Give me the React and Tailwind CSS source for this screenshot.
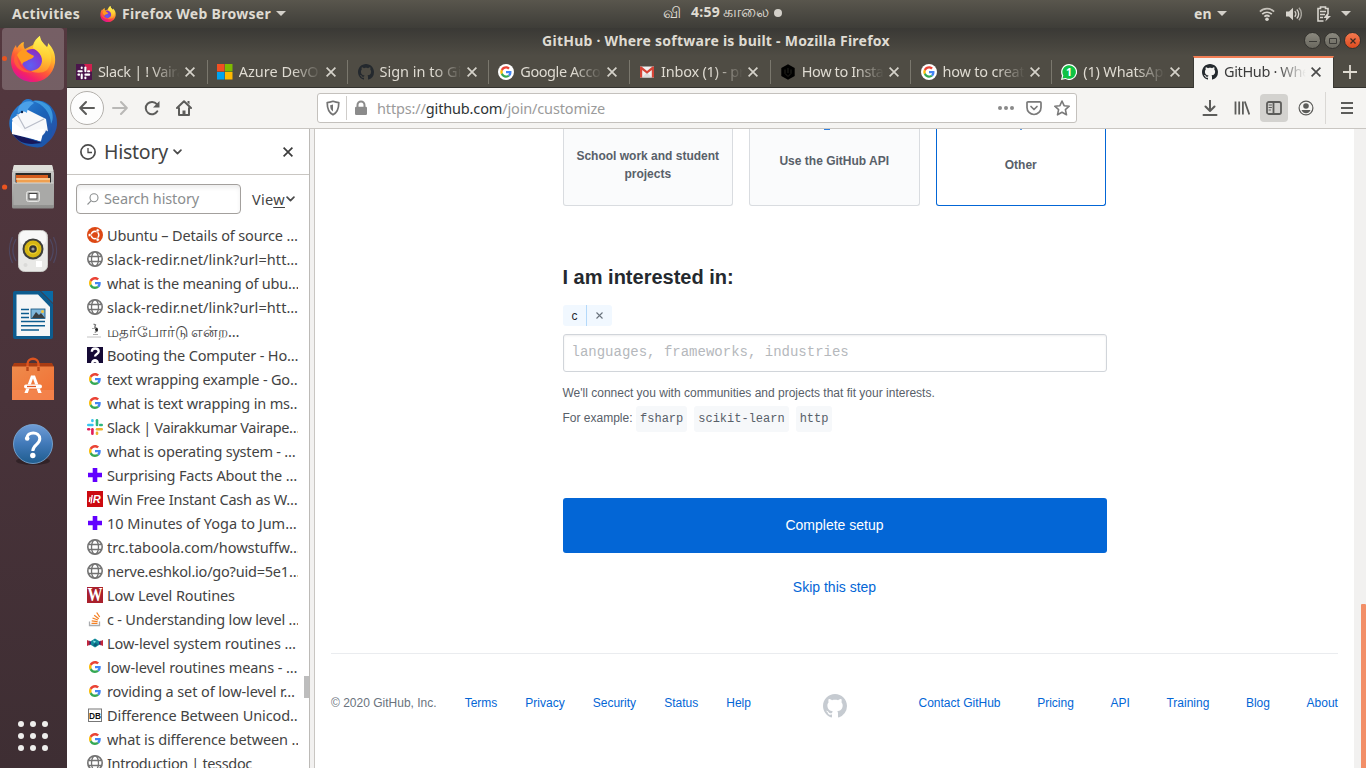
const UI = "font-['Noto_Sans',sans-serif]";

/* ---------- shared logos ---------- */

function Octocat({ className }) {
  return (
    <svg viewBox="0 0 16 16" className={className} fill="currentColor">
      <path d="M8 0C3.58 0 0 3.58 0 8c0 3.54 2.29 6.53 5.47 7.59.4.07.55-.17.55-.38 0-.19-.01-.82-.01-1.49-2.01.37-2.53-.49-2.69-.94-.09-.23-.48-.94-.82-1.13-.28-.15-.68-.52-.01-.53.63-.01 1.08.58 1.23.82.72 1.21 1.87.87 2.33.66.07-.52.28-.87.51-1.07-1.78-.2-3.64-.89-3.64-3.95 0-.87.31-1.59.82-2.15-.08-.2-.36-1.02.08-2.12 0 0 .67-.21 2.2.82.64-.18 1.32-.27 2-.27.68 0 1.36.09 2 .27 1.53-1.04 2.2-.82 2.2-.82.44 1.1.16 1.92.08 2.12.51.56.82 1.27.82 2.15 0 3.07-1.87 3.75-3.65 3.95.29.25.54.73.54 1.48 0 1.07-.01 1.93-.01 2.2 0 .21.15.46.55.38A8.013 8.013 0 0016 8c0-4.42-3.58-8-8-8z" />
    </svg>
  );
}

function GooglePaths() {
  return (
    <>
      <path fill="#EA4335" d="M24 9.5c3.54 0 6.71 1.22 9.21 3.6l6.85-6.85C35.9 2.38 30.47 0 24 0 14.62 0 6.51 5.38 2.56 13.22l7.98 6.19C12.43 13.72 17.74 9.5 24 9.5z" />
      <path fill="#4285F4" d="M46.98 24.55c0-1.57-.15-3.09-.38-4.55H24v9.02h12.94c-.58 2.96-2.26 5.48-4.78 7.18l7.73 6c4.51-4.18 7.09-10.36 7.09-17.65z" />
      <path fill="#FBBC05" d="M10.53 28.59c-.48-1.45-.76-2.99-.76-4.59s.27-3.14.76-4.59l-7.98-6.19C.92 16.46 0 20.12 0 24c0 3.88.92 7.54 2.56 10.78l7.97-6.19z" />
      <path fill="#34A853" d="M24 48c6.48 0 11.93-2.13 15.89-5.81l-7.73-6c-2.15 1.45-4.92 2.3-8.16 2.3-6.26 0-11.57-4.22-13.47-9.91l-7.98 6.19C6.51 42.62 14.62 48 24 48z" />
    </>
  );
}

function Firefox({ className }) {
  return (
    <svg viewBox="0 0 46 46" className={className}>
      <defs>
        <linearGradient id="ffBody" x1="0.8" y1="0.1" x2="0.3" y2="1">
          <stop offset="0" stopColor="#fff44f" />
          <stop offset="0.3" stopColor="#ffb52a" />
          <stop offset="0.6" stopColor="#ff5b36" />
          <stop offset="0.85" stopColor="#f4206a" />
          <stop offset="1" stopColor="#d6179a" />
        </linearGradient>
        <linearGradient id="ffTail" x1="0.6" y1="0" x2="0.5" y2="1">
          <stop offset="0" stopColor="#fff65a" />
          <stop offset="0.55" stopColor="#ffce33" />
          <stop offset="1" stopColor="#ff8a2b" />
        </linearGradient>
        <radialGradient id="ffGlobe" cx="0.4" cy="0.75" r="0.8">
          <stop offset="0" stopColor="#5d60f2" />
          <stop offset="0.55" stopColor="#7a3fdc" />
          <stop offset="1" stopColor="#8e2bb5" />
        </radialGradient>
      </defs>
      <path fill="url(#ffBody)" d="M23 9 C24 5 27 2 30 0 C30 4 33 7 37 11 C38 10 38 8 38 7 C43 12 46 18 45 27 C43 39 34 46 23 46 C10 46 1 37 1 25 C1 19 3 13 6 9 C6 11 7 12 7 12 C9 9 12 6 14 6 C13 9 14 12 15 13 Z" />
      <circle cx="22.500" cy="24" r="11" fill="url(#ffGlobe)" />
      <path fill="url(#ffTail)" d="M23 12 C24 6 27 2 30 0 C30 5 34 8 38 13 C42 19 43 27 37 34 C32 38 24 37 21 35 C30 34 34 27 31 20 C29 16 26 14 23 12 Z" />
      <path fill="#ff9a1f" d="M15 13 C17 17 21 18 24 20 C23 23 20 23 18 24 C16 26 13 25 12 29 C11 25 8 22 7 19 C9 15 12 14 15 13 Z" />
      <path fill="#ff6a2f" fillOpacity="0.7" d="M7 19 C7 30 15 36 23 36 C15 38 6 34 4 25 C4 21 5 18 7 16 Z" />
    </svg>
  );
}

const hash = (a, b, c, d) => (
  <>
    <g fill={a}><rect x="0" y="4.700" width="6.700" height="2.600" rx="1.300" /><rect x="4.100" y="0" width="2.600" height="3.300" rx="1.300" /></g>
    <g fill={b}><rect x="8.700" y="0" width="2.600" height="7.300" rx="1.300" /><rect x="12" y="4.700" width="4" height="2.600" rx="1.300" /></g>
    <g fill={c}><rect x="8.700" y="9" width="7.300" height="2.600" rx="1.300" /><rect x="8.700" y="12.500" width="2.600" height="3.500" rx="1.300" /></g>
    <g fill={d}><rect x="4.100" y="9" width="2.600" height="7" rx="1.300" /><rect x="0" y="9" width="3.400" height="2.600" rx="1.300" /></g>
  </>
);

/* ---------- favicons ---------- */

function Fav({ kind }) {
  const svg = (children) => (
    <svg viewBox="0 0 16 16" className="h-4 w-4 shrink-0">{children}</svg>
  );
  switch (kind) {
    case "slackTab":
      return svg(
        <>
          <rect width="16" height="16" fill="#4a154b" />
          <path d="M8 0h8v7.500H12z" fill="#d1204f" />
          <g transform="translate(1.400 2.400) scale(.8)">{hash("#fff", "#fff", "#fff", "#fff")}</g>
        </>
      );
    case "slack":
      return svg(hash("#36c5f0", "#2eb67d", "#ecb22e", "#e01e5a"));
    case "azure":
      return svg(
        <>
          <path d="M0 0h7.500v7.500H0z" fill="#f25022" />
          <path d="M8 0h7.500v7.500H8z" fill="#7fba00" />
          <path d="M0 8h7.500v7.500H0z" fill="#00a4ef" />
          <path d="M8 8h7.500v7.500H8z" fill="#ffb900" />
        </>
      );
    case "github":
      return <Octocat className="h-4 w-4 shrink-0 text-[#24292e]" />;
    case "googleTab":
      return svg(
        <>
          <circle cx="8" cy="8" r="8" fill="#fff" />
          <g transform="translate(2.300 2.300) scale(.238)"><GooglePaths /></g>
        </>
      );
    case "google":
      return svg(<g transform="translate(2 2) scale(.25)"><GooglePaths /></g>);
    case "gmail":
      return svg(
        <>
          <path d="M1 2.500h14v11H1z" fill="#f1f1f1" />
          <path d="M3 13.500 8 8.500l5 5z" fill="#dcdcdc" />
          <path d="M1 13.500v-11h1.500L8 7l5.500-4.500H15v11h-2.200V6L8 9.800 3.200 6v7.500z" fill="#d54437" />
        </>
      );
    case "hex":
      return svg(
        <>
          <path d="M8 0.300 14.700 4v8L8 15.700 1.300 12V4z" fill="#000" />
          <path d="M8 4v5M5 5.500v4l3 3 3-3v-4" stroke="#25241f" strokeWidth="1" fill="none" />
        </>
      );
    case "whatsapp":
      return svg(
        <>
          <path d="M8 0a8 8 0 1 1-3.600 15.100L0 16l1-4.300A8 8 0 0 1 8 0z" fill="#fff" />
          <path d="M8 1.200a6.800 6.800 0 1 1-3.300 12.700l-3.200.7.800-3.100A6.800 6.800 0 0 1 8 1.200z" fill="#0fc144" />
          <text x="8" y="12" textAnchor="middle" fontSize="10.500" fontWeight="700" fill="#fff" fontFamily="Noto Sans">1</text>
        </>
      );
    case "ubuntu":
      return svg(
        <>
          <circle cx="8" cy="8" r="8" fill="#dd4814" />
          <circle cx="8" cy="8" r="3.700" fill="none" stroke="#fff" strokeWidth="1.700" />
          <path d="M8 8 12.500 2M8 8H1M8 8l4.500 6" stroke="#dd4814" strokeWidth=".8" />
          <circle cx="8" cy="8" r="2.600" fill="#dd4814" />
          <g fill="#fff" stroke="#dd4814" strokeWidth=".5">
            <circle cx="2.700" cy="8" r="1.600" /><circle cx="10.700" cy="3.300" r="1.600" /><circle cx="10.700" cy="12.700" r="1.600" />
          </g>
        </>
      );
    case "globe":
      return svg(
        <g fill="none" stroke="#737373" strokeWidth="1.300">
          <circle cx="8" cy="8" r="7.200" strokeWidth="1.600" />
          <ellipse cx="8" cy="8" rx="3.500" ry="7.200" />
          <path d="M1.600 5.500h12.800M1.600 10.500h12.800" />
        </g>
      );
    case "microscope":
      return svg(
        <>
          <path d="M0 14h14" stroke="#c4c4c4" strokeWidth="1" />
          <path d="M6.500 1l2 .8-.7 2.400 2.200 1.300.3 2.500-2.600 1.500" fill="none" stroke="#777" strokeWidth="1.300" />
          <circle cx="9.500" cy="6.500" r="1.500" fill="#222" />
          <path d="M5 5.500h3M6 11.500h5" stroke="#aaa" strokeWidth="1" />
        </>
      );
    case "howstuff":
      return svg(
        <>
          <rect width="16" height="16" fill="#150a35" />
          <path d="M4.800 4.800C4.900 2.300 6.400 1.500 8.200 1.500c1.900 0 3.500 1 3.500 2.900 0 2.700-3.700 2.500-3.700 5.200" fill="none" stroke="#fff" strokeWidth="2.300" />
          <path d="M4 16c.5-3 2-4 4-4s3.500 1 4 4h-2.500c-.3-1-3-1-3 0z" fill="#fff" />
        </>
      );
    case "plus":
      return svg(<path d="M5.700 1h4.600v4.700H15v4.600h-4.700V15H5.700v-4.700H1V5.700h4.700z" fill="#6200ff" />);
    case "r":
      return svg(
        <>
          <rect width="16" height="16" fill="#cc0a10" />
          <path d="M3.200 6l-1 5M5.200 4 4 12.500" stroke="#fff" strokeWidth="1.300" />
          <text x="9.700" y="12" textAnchor="middle" fontSize="11" fontWeight="700" fontStyle="italic" fill="#fff" fontFamily="Liberation Sans">R</text>
        </>
      );
    case "w":
      return svg(
        <>
          <rect width="16" height="16" fill="#a9202c" />
          <text x="8" y="14" textAnchor="middle" fontSize="18" fontWeight="700" fill="#fff" fontFamily="Liberation Serif" textLength="15" lengthAdjust="spacingAndGlyphs">W</text>
        </>
      );
    case "so":
      return svg(
        <g fill="none">
          <path d="M2.500 10.500v4h10v-4" stroke="#a9abae" strokeWidth="1.300" />
          <path d="M4.500 12.300h6M4.700 9.800l5.900.8M5.500 7l5.500 2M7.200 4.200l4.600 3.500M9.700 1.500l3 4.500" stroke="#f48024" strokeWidth="1.300" />
        </g>
      );
    case "molecule":
      return svg(
        <>
          <path d="M0 5 3.500 6.500v3L0 11z" fill="#c3263b" /><path d="M16 5l-3.500 1.500v3L16 11z" fill="#c3263b" />
          <path d="M2.500 5.500 5 7.500v1l-2.500 2zM13.500 5.500 11 7.500v1l2.500 2z" fill="#2b2b7c" />
          <path d="M8 3.500 12 6v4l-4 2.500L4 10V6z" fill="#128a9a" /><path d="M6 5.500l3 1-2 1.500z" fill="#8fe3ea" /><path d="M8 8l3 1-2 2.500-3-1z" fill="#0b5a78" />
        </>
      );
    case "db":
      return svg(
        <>
          <rect x="1.500" y="2" width="13" height="12.500" fill="#fff" stroke="#777" />
          <text x="8" y="11.500" textAnchor="middle" fontSize="9" fontWeight="700" fill="#111" fontFamily="Liberation Sans" textLength="12" lengthAdjust="spacingAndGlyphs">DB</text>
        </>
      );
    default:
      return null;
  }
}

/* ---------- GNOME top bar ---------- */

function Caret({ className }) {
  return (
    <svg viewBox="0 0 10 5" className={`h-[5px] w-[10px] shrink-0 ${className}`}>
      <path d="M0 0h10L5 5z" fill="#d3d0c9" />
    </svg>
  );
}

function TopBar() {
  return (
    <header className="flex h-7 items-center bg-linear-to-b from-[#59564d] to-[#3e3d38] pb-px text-[14px] font-bold text-[#dfdbd2]">
      <div className="flex w-[663px] shrink-0 items-center whitespace-nowrap pl-3">
        <span className="w-[88px] tracking-[0.3px]">Activities</span>
        <Firefox className="h-4 w-4" />
        <span className="ml-1.5 w-[154px] tracking-[0.3px]">Firefox Web Browser</span>
        <Caret className="" />
      </div>
      <div className="flex w-[531px] shrink-0 items-center pb-px leading-5 whitespace-nowrap">
        <span className="w-7 pb-0.5 text-[15.500px] font-medium">வி</span>
        <span className="flex w-[83px] items-baseline pb-[3px]">
          <span className="w-8 tracking-[0.3px]">4:59</span>
          <span className="text-[15.500px] font-medium tracking-[0.4px]">காலை</span>
        </span>
        <span className="h-2 w-2 rounded-full bg-[#d3d0c9]" />
      </div>
      <span className="w-[23px] tracking-[0.2px]">en</span>
      <Caret className="" />
      <svg viewBox="0 0 16 16" className="ml-[32px] h-4 w-4" fill="none" stroke="#d8d5ce" strokeWidth="1.700">
        <path d="M.9 5.600c4-3.900 10.200-3.900 14.200 0" strokeOpacity=".85" />
        <path d="M3.200 8.200c2.700-2.600 6.900-2.600 9.600 0M5.400 10.700c1.500-1.400 3.700-1.400 5.200 0" />
        <circle cx="8" cy="13.300" r="1.800" fill="#d8d5ce" stroke="none" />
      </svg>
      <svg viewBox="0 0 16 16" className="ml-[11px] h-4 w-4" fill="none" stroke="#d8d5ce" strokeWidth="1.400">
        <path d="M0 5.500h3L7 1.800v12.400L3 10.500H0z" fill="#d8d5ce" stroke="none" />
        <path d="M8.700 5.300c1.500 1.500 1.500 3.900 0 5.400M10.800 3.500c2.500 2.500 2.500 6.500 0 9" /><path d="M12.900 1.800c3.300 3.400 3.300 9 0 12.400" strokeOpacity=".65" />
      </svg>
      <svg viewBox="0 0 16 16" className="ml-[13px] h-4 w-4" fill="none" stroke="#d8d5ce" strokeWidth="1.600">
        <path d="M13 7V2.500h-2.500V1h-5v1.500H3V15h5.500" />
        <path d="M5 5.500h6M5 8.500h5M5 11.500h3" />
        <path d="M12.500 7l-4 5h2.800l-1 3.500L16 10h-3l1-3z" fill="#d8d5ce" stroke="none" />
      </svg>
      <Caret className="ml-2.5" />
    </header>
  );
}

/* ---------- dock ---------- */

function Dock() {
  return (
    <aside className="flex w-[67px] shrink-0 flex-col justify-between bg-linear-to-b from-[#54383f] via-[#49333a] to-[#3e2e33]">
      <div className="flex flex-col">
        <div className="flex h-[63px] items-start pl-0.5">
          <div className="relative flex h-[62px] w-[62px] items-center justify-center rounded bg-white/20">
            <Firefox className="h-[46px] w-[46px]" />
            <span className="absolute top-[28px] left-0 h-[5px] w-[5px] rounded-full bg-[#e95420]" />
          </div>
        </div>
        <svg viewBox="0 91 67 64" className="h-16 w-[67px]">
          <defs>
            <linearGradient id="tb" x1="0" y1="0" x2="1" y2="1"><stop offset="0" stopColor="#2f8be0" /><stop offset=".5" stopColor="#1b63b8" /><stop offset="1" stopColor="#2a4aa0" /></linearGradient>
          </defs>
          <path d="M21 104C24 98 30 98 33 101 47 98 58 110 57 125c-1 10-8 18-15 21l-25-7C10 133 8 125 10 118c2-6 6-11 11-14z" fill="url(#tb)" />
          <path d="M12 119l14-10 20 10 2 13-6 10-26-8z" fill="#f7f8fa" />
          <path d="M13 133c8 1 20 6 28 9l-4-6c5 1 8-2 9-6 2 3 5 1 6-3 1 8-3 16-10 20-12 2-25-4-29-14z" fill="#1c57ab" />
          <path d="M13 134l11 3 18 6-10 1c-9 0-16-4-19-10z" fill="#17185a" />
          <path d="M12 121v13l29 7 3-12-20 2z" fill="#fff" />
          <path d="M17 114l8 14.500 19-9.500" fill="none" stroke="#b9bdc8" strokeWidth="1.200" />
          <path d="M20 105c4-4 11-5 14-2-4 3-7 6-7 10-3-2-7-2-9 1-1-3 0-6 2-9z" fill="#4ba0e8" />
          <path d="M33 101c10 3 18 12 18 23 3-5 2-13-2-18-5-4-10-6-16-5z" fill="#43a5e6" fillOpacity=".8" />
          <circle cx="22" cy="112" r="1.200" fill="#0b2450" />
        </svg>
        <svg viewBox="0 155 67 64" className="h-16 w-[67px]">
          <defs>
            <linearGradient id="fl" x1="0" y1="0" x2="0" y2="1"><stop offset="0" stopColor="#d2d2d0" /><stop offset="1" stopColor="#8e8e8c" /></linearGradient>
          </defs>
          <circle cx="4.600" cy="187" r="2.600" fill="#e95420" />
          <path d="M14 165h38l2 8v34a1.500 1.500 0 0 1-1.500 1.500h-39A1.500 1.500 0 0 1 12 207v-34z" fill="url(#fl)" />
          <path d="M14 165h38l1.500 6h-41z" fill="#deded9" />
          <rect x="15.500" y="173" width="35.500" height="11" fill="#2b2a29" />
          <rect x="16" y="175" width="32" height="7" fill="#d55c1d" /><rect x="17" y="178" width="33" height="6" fill="#f0a050" /><path d="M16 179h34" stroke="#ffe9c8" />
          <path d="M13.500 183h40v22h-40z" fill="#a9a9a7" /><path d="M13.500 183h40" stroke="#d8d8d6" />
          <rect x="26.500" y="191.500" width="13" height="10" rx="2" fill="#b9b9b7" stroke="#e4e4e2" />
          <rect x="29" y="193.500" width="8" height="5.500" fill="#fff" stroke="#444" />
        </svg>
        <svg viewBox="0 219 67 64" className="h-16 w-[67px]">
          <g fill="none" stroke="#4f5a86" strokeWidth="1.300" strokeOpacity=".5">
            <path d="M16 239c-4 7-4 15 0 22M12.500 237c-4 8-4 18 0 26M50 239c4 7 4 15 0 22M53.500 237c4 8 4 18 0 26" />
          </g>
          <rect x="18.500" y="230.500" width="29" height="41" rx="6" fill="#e9e9e7" stroke="#c9c9c6" />
          <rect x="20" y="231" width="26" height="14" rx="5" fill="#f8f8f7" />
          <circle cx="33" cy="249" r="10.500" fill="#3d3e3b" /><circle cx="33" cy="249" r="8.500" fill="#d6b613" /><circle cx="33" cy="249" r="5.200" fill="#e8cb2c" /><circle cx="33" cy="249" r="3.800" fill="#333" /><circle cx="33" cy="249" r="1.600" fill="#9d9d9d" />
          <circle cx="25.500" cy="265" r="2" fill="#dadad8" /><rect x="36" y="261" width="6" height="6" fill="#fff" />
        </svg>
        <svg viewBox="0 283 67 64" className="h-16 w-[67px]">
          <path d="M15 291h25l13 13v33a2 2 0 0 1-2 2H15a2 2 0 0 1-2-2v-44a2 2 0 0 1 2-2z" fill="#0d5c8f" />
          <path d="M41 291h12v12z" fill="#0a6aa5" />
          <path d="M16.500 294.500h21.500l12 12.500v29H16.500z" fill="#f5f6f7" />
          <g stroke="#0d5c8f" strokeWidth="1.600"><path d="M21 309.500h8M21 313.500h8M21 317.500h8M21 321.500h24M21 325.800h24M21 330h18" /></g>
          <rect x="31" y="309" width="14" height="9.500" fill="#7fb6da" stroke="#0d4f7c" strokeWidth=".8" /><path d="M32 318l4-6 3 3 2-2 4 5z" fill="#3a3f42" /><circle cx="42.500" cy="311.500" r="1.500" fill="#f3c43b" />
        </svg>
        <svg viewBox="0 347 67 64" className="h-16 w-[67px]">
          <defs><linearGradient id="sw" x1="0" y1="0" x2="1" y2="1"><stop offset="0" stopColor="#ee8b4c" /><stop offset="1" stopColor="#f26f33" /></linearGradient></defs>
          <path d="M14 363h38l2 4v4H12v-4z" fill="#a93c13" />
          <path d="M27.500 370v-6c0-7 11-7 11 0v6" fill="none" stroke="#dd5420" strokeWidth="2.400" />
          <rect x="12" y="366.500" width="42" height="33.500" fill="url(#sw)" />
          <path d="M12 390h42v10H12z" fill="#f58a56" fillOpacity=".6" />
          <path d="M27.500 371v-4M38.500 371v-4" stroke="#b9481a" strokeWidth="2.400" />
          <path d="M31 375.500h4l3.300 9h-3.200L33 378.500l-2.100 6h-3.200zM26.200 388.500h3.200l-1.600 4.500h-3.400zM36.600 388.500h3.200l1.900 4.500h-3.500z" fill="#fff" />
          <rect x="24" y="384.500" width="18" height="4" rx="2" fill="#fff" /><path d="M27 386.500h9" stroke="#e0561f" strokeWidth="1.300" />
        </svg>
        <svg viewBox="0 411 67 64" className="h-16 w-[67px]">
          <defs><linearGradient id="hp" x1="0" y1="0" x2="0" y2="1"><stop offset="0" stopColor="#6f9cd6" /><stop offset=".5" stopColor="#4179b8" /><stop offset="1" stopColor="#1f5d8f" /></linearGradient></defs>
          <ellipse cx="33" cy="461" rx="17" ry="4" fill="#000" fillOpacity=".3" />
          <circle cx="33" cy="444" r="19.500" fill="url(#hp)" stroke="#7fb0dd" strokeWidth=".8" />
          <path d="M26.800 438.500c0-7.500 13-7.500 13 .3 0 5.700-7 6-7 12.200" fill="none" stroke="#fff" strokeWidth="3" /><circle cx="32.800" cy="455.500" r="2.700" fill="#fff" />
          <circle cx="27.200" cy="438.500" r="2.300" fill="#fff" />
        </svg>
      </div>
      <div className="mb-[17px] ml-[18px] grid w-[30px] grid-cols-3 gap-1.5">
        {Array.from({ length: 9 }, (_, i) => (
          <span key={i} className="h-1.5 w-1.5 rounded-full bg-[#efeeec]" />
        ))}
      </div>
    </aside>
  );
}

/* ---------- Firefox chrome ---------- */

const TABS = [
  ["slackTab", "Slack | ! Vaira", "tracking-[-0.36px]"],
  ["azure", "Azure DevOps", "tracking-[0px]"],
  ["github", "Sign in to GitH", "tracking-[0px]"],
  ["googleTab", "Google Accou", "tracking-[-0.42px]"],
  ["gmail", "Inbox (1) - pra", "tracking-[-0.22px]"],
  ["hex", "How to Install", "tracking-[-0.38px]"],
  ["googleTab", "how to create", "tracking-[-0.21px]"],
  ["whatsapp", "(1) WhatsApp", "tracking-[-0.16px]"],
];

const FADE = "[mask-image:linear-gradient(to_right,black_65%,transparent_100%)]";

function CloseX({ color }) {
  return (
    <svg viewBox="0 0 10 10" className="h-[10px] w-[10px] shrink-0" stroke={color} strokeWidth="1.700">
      <path d="M.6.600l8.800 8.800M9.400.600.600 9.400" />
    </svg>
  );
}

const WINDOW_BUTTON = "flex h-[17px] w-[17px] items-center justify-center rounded-full border border-[#34332f] bg-linear-to-b";

function WindowButtons() {
  return (
    <div className="flex items-center gap-[3px] pr-[5px]">
      <span className={`${WINDOW_BUTTON} from-[#8b897f] to-[#6a685f]`}>
        <svg viewBox="0 0 8 8" className="h-2 w-2"><path d="M0 4.500h8" stroke="#3c3b37" /></svg>
      </span>
      <span className={`${WINDOW_BUTTON} from-[#8b897f] to-[#6a685f]`}>
        <svg viewBox="0 0 8 8" className="h-2 w-2"><path d="M.5 1.500h7v5h-7z" stroke="#3c3b37" fill="none" /></svg>
      </span>
      <span className={`${WINDOW_BUTTON} from-[#f4794e] to-[#dd4a1d]`}>
        <svg viewBox="0 0 8 8" className="h-2 w-2"><path d="M1.500 1.500l5 5M6.500 1.500l-5 5" stroke="#3c2a22" strokeWidth="1.200" /></svg>
      </span>
    </div>
  );
}

function TabStrip() {
  return (
    <div className="flex h-8 bg-[#4f4c44]">
      {TABS.map(([icon, label, track], i) => (
        <div key={i} className="flex w-[140.750px] shrink-0 items-center border-b border-[#33322e] pl-[9px]">
          <Fav kind={icon} />
          <span className={`ml-1.5 w-[82px] overflow-hidden text-[14.500px] whitespace-nowrap text-[#dfdbd2] ${track} ${FADE}`}>{label}</span>
          <span className="ml-[5px] flex"><CloseX color="#d5d2ca" /></span>
          {i < 7 && <span className="ml-[11.500px] h-6 w-px shrink-0 bg-[#7a776d]" />}
        </div>
      ))}
      <div className="flex w-[141px] shrink-0 items-center border-x border-t-2 border-x-[#3a3934] border-t-[#f27e55] bg-[#f5f4f2] pb-0.5 pl-2">
        <Fav kind="github" />
        <span className={`ml-1.5 w-[82px] overflow-hidden text-[14.500px] tracking-[-0.360px] whitespace-nowrap text-[#3c3c3c] ${FADE}`}>GitHub · Where</span>
        <span className="ml-[5px] flex"><CloseX color="#4a4a4a" /></span>
      </div>
      <div className="flex flex-1 items-center justify-center border-b border-[#33322e]">
        <svg viewBox="0 0 14 14" className="h-3.5 w-3.5" stroke="#dfdbd2" strokeWidth="1.800"><path d="M7 0v14M0 7h14" /></svg>
      </div>
    </div>
  );
}

function Toolbar() {
  const s = { fill: "none", stroke: "#5c5c5a", strokeWidth: 2, strokeLinecap: "round", strokeLinejoin: "round" };
  return (
    <div className="flex h-[41px] items-center border-b border-[#c9c6c2] bg-[#f5f4f2] pl-[3px]">
      <span className="flex h-[34px] w-[34px] shrink-0 items-center justify-center rounded-full border border-[#b3b0ac] bg-[#fdfdfd]">
        <svg viewBox="0 0 16 16" className="h-4 w-4" {...s}><path d="M15 8H1.500M7 2 1.200 8 7 14" /></svg>
      </span>
      <svg viewBox="0 0 16 16" className="ml-2 h-4 w-4" {...s} stroke="#b9b8b6"><path d="M1 8h13.500M9 2l5.800 6L9 14" /></svg>
      <svg viewBox="0 0 16 16" className="ml-4 h-4 w-4" {...s}><path d="M13.300 11.300A6.200 6.200 0 1 1 12.800 4.200" /><path d="M15.500 1v6.500H9z" fill="#5c5c5a" stroke="none" /></svg>
      <svg viewBox="0 0 16 16" className="ml-4 h-4 w-4" {...s}><path d="M1 8 8 1.300 15 8M3 8v7h10V8" /><path d="M6.500 15v-4.500h3V15z" fill="#5c5c5a" stroke="none" /><path d="M11.500 1h2v3.500l-2-2z" fill="#5c5c5a" stroke="none" /></svg>
      <div className="ml-[125px] flex h-[30px] w-[760px] shrink-0 items-center rounded-[3px] border border-[#c4c1bd] bg-white">
        <svg viewBox="0 0 16 16" className="ml-[7px] h-4 w-4" fill="none" stroke="#737373" strokeWidth="1.700" strokeLinejoin="round"><path d="M8 1.300C6 2 4 2.500 2.200 2.600 2.200 8 3 12.500 8 14.800c5-2.300 5.800-6.800 5.800-12.200C12 2.500 10 2 8 1.300z" /><path d="M8 4.500v7c-2.300-1.400-2.700-3.500-2.800-6.300z" fill="#737373" stroke="none" /></svg>
        <span className="ml-[5px] h-6 w-px bg-[#cfcdca]" />
        <svg viewBox="0 0 14 16" className="ml-[7px] h-4 w-[14px]"><path d="M3.500 7V5a3.500 3.500 0 0 1 7 0v2" fill="none" stroke="#8b8b8b" strokeWidth="2" /><rect x="1" y="6.700" width="12" height="8.300" rx="1.200" fill="#8b8b8b" /></svg>
        <span className="ml-[9px] w-[621px] pt-0.5 text-[14.500px] tracking-[-0.150px] text-[#9b9b9b]">https://<span className="text-[#2e3436]">github.com</span>/join/customize</span>
        <svg viewBox="0 0 16 4" className="h-1 w-4" fill="#8a8a8a"><circle cx="2" cy="2" r="2" /><circle cx="8" cy="2" r="2" /><circle cx="14" cy="2" r="2" /></svg>
        <svg viewBox="0 0 16 16" className="ml-3 h-4 w-4" fill="none" stroke="#7a7a7a" strokeWidth="1.700" strokeLinecap="round" strokeLinejoin="round"><path d="M2 1.800h12a1 1 0 0 1 1 1V7.500a7 7 0 0 1-14 0V2.800a1 1 0 0 1 1-1z" /><path d="M5 6.500l3 3 3-3" /></svg>
        <svg viewBox="0 0 16 16" className="ml-3 h-4 w-4" fill="none" stroke="#7a7a7a" strokeWidth="1.600" strokeLinejoin="round"><path d="M8 1l2.100 4.700 5.100.5-3.800 3.400 1.100 5.200L8 12.200l-4.500 2.600 1.100-5.200L.8 6.200l5.100-.5z" /></svg>
      </div>
      <svg viewBox="0 0 16 16" className="ml-[125px] h-4 w-4" {...s}><path d="M8 .5v10M3.500 6.500 8 11l4.500-4.500M1.500 15h13" /></svg>
      <svg viewBox="0 0 16 16" className="ml-4 h-4 w-4" {...s} strokeWidth="1.800" strokeLinecap="butt"><path d="M1.500 1.500v13M5.200 1.500v13M8.900 1.500v13M10.800 1.500l4.500 13" /></svg>
      <span className="ml-2.5 flex h-7 w-7 items-center justify-center rounded bg-[#d3d2cf]">
        <svg viewBox="0 0 16 16" className="h-4 w-4" {...s} strokeWidth="1.800"><rect x="1" y="2" width="14" height="12" rx="1.800" /><path d="M7.500 2v12" /><path d="M3 5h2.500M3 7.500h2.500M3 10h1.500" strokeWidth="1" /></svg>
      </span>
      <svg viewBox="0 0 16 16" className="ml-2.5 h-4 w-4" fill="none" stroke="#5c5c5a"><circle cx="8" cy="8" r="6.900" strokeWidth="1.200" /><circle cx="8" cy="6" r="2.800" fill="#5c5c5a" stroke="none" /><path d="M3.500 10h9c-1 2.300-2.500 3.300-4.500 3.300s-3.500-1-4.500-3.300z" fill="#5c5c5a" stroke="none" /></svg>
      <span className="ml-[11px] h-8 w-px bg-[#dad8d5]" />
      <svg viewBox="0 0 12 12" className="ml-[15px] h-3 w-3" stroke="#5c5c5a" strokeWidth="2"><path d="M0 1h12M0 6h12M0 11h12" /></svg>
    </div>
  );
}

/* ---------- history sidebar ---------- */

const HISTORY = [
  ["ubuntu", "Ubuntu – Details of source …", "tracking-[-0.15px]"],
  ["globe", "slack-redir.net/link?url=htt…", "tracking-[0.09px]"],
  ["google", "what is the meaning of ubu…", "tracking-[-0.22px]"],
  ["globe", "slack-redir.net/link?url=htt…", "tracking-[0.09px]"],
  ["microscope", "மதர்போர்டு என்ற…", "tracking-[-0.08px]"],
  ["howstuff", "Booting the Computer - Ho…", "tracking-[-0.17px]"],
  ["google", "text wrapping example - Go…", "tracking-[-0.19px]"],
  ["google", "what is text wrapping in ms…", "tracking-[-0.16px]"],
  ["slack", "Slack | Vairakkumar Vairape…", "tracking-[-0.34px]"],
  ["google", "what is operating system - …", "tracking-[-0.2px]"],
  ["plus", "Surprising Facts About the …", "tracking-[-0.18px]"],
  ["r", "Win Free Instant Cash as W…", "tracking-[-0.18px]"],
  ["plus", "10 Minutes of Yoga to Jum…", "tracking-[0px]"],
  ["globe", "trc.taboola.com/howstuffw…", "tracking-[-0.02px]"],
  ["globe", "nerve.eshkol.io/go?uid=5e1…", "tracking-[-0.21px]"],
  ["w", "Low Level Routines", "tracking-[-0.09px]"],
  ["so", "c - Understanding low level …", "tracking-[-0.21px]"],
  ["molecule", "Low-level system routines …", "tracking-[-0.06px]"],
  ["google", "low-level routines means - …", "tracking-[-0.08px]"],
  ["google", "roviding a set of low-level r…", "tracking-[-0.11px]"],
  ["db", "Difference Between Unicod…", "tracking-[-0.1px]"],
  ["google", "what is difference between …", "tracking-[-0.1px]"],
  ["globe", "Introduction | tessdoc", "tracking-[-0.35px]"],
];

function Chevron({ className }) {
  return (
    <svg viewBox="0 0 10 6" className={className} fill="none" stroke="#4a4a4a" strokeWidth="1.900" strokeLinecap="round" strokeLinejoin="round">
      <path d="M1.200 1 5 4.800 8.800 1" />
    </svg>
  );
}

function Sidebar() {
  return (
    <section className="relative flex w-[243px] shrink-0 flex-col overflow-hidden border-r border-[#bcbab7] bg-white text-[#434343]">
      <div className="flex h-[46px] shrink-0 items-center border-b border-[#c9c6c2] pl-[13px]">
        <svg viewBox="0 0 16 16" className="h-4 w-4" fill="none" stroke="#4a4a4a"><circle cx="8" cy="8" r="7.100" strokeWidth="1.700" /><path d="M8 4v4.500h4" strokeWidth="1.300" /></svg>
        <span className="ml-2 w-[69px] text-[19.500px] tracking-[-0.250px]">History</span>
        <Chevron className="h-[6px] w-[9px]" />
        <span className="ml-[101px] flex"><CloseX color="#3c3c3c" /></span>
      </div>
      <div className="flex shrink-0 items-center pt-[9px] pl-[9px]">
        <div className="flex h-[30px] w-[165px] items-center rounded border border-[#a3a09d] bg-white pl-2.5 shadow-[inset_0_3px_4px_rgba(0,0,0,0.07)]">
          <svg viewBox="0 0 12 12" className="h-3 w-3" fill="none" stroke="#8b8e8f" strokeWidth="1.100"><circle cx="7" cy="4.800" r="4" /><path d="M4 7.800.5 11.500" /></svg>
          <span className="ml-[5px] text-[14.500px] tracking-[-0.120px] text-[#8b8e8f]">Search history</span>
        </div>
        <span className="ml-[11px] w-[34px] pt-px text-[14.500px] tracking-[0.300px] whitespace-nowrap">Vie<span className="underline underline-offset-2">w</span></span>
        <Chevron className="h-[6px] w-[9px]" />
      </div>
      <ul className="mt-[9px] pl-5">
        {HISTORY.map(([icon, label, track], i) => (
          <li key={i} className="flex h-6 items-center">
            <Fav kind={icon} />
            <span className={`ml-1 w-[191px] overflow-hidden text-[14.500px] leading-6 whitespace-nowrap ${track}`}>{label}</span>
          </li>
        ))}
      </ul>
      <span className="absolute top-[547px] right-0 h-[22px] w-[5px] bg-[#bdbdbd]" />
    </section>
  );
}

/* ---------- page ---------- */

const CARD = "flex h-[77px] flex-col items-center rounded-b-[3px] border border-t-0 px-2 text-center text-[12px] leading-[18px] font-bold text-[#586069]";
const CODE = "flex h-[26px] items-center rounded-[3px] bg-[#f6f8fa] px-1 font-['Liberation_Mono',monospace] text-[12px]";

function Page() {
  return (
    <main className="flex min-w-0 flex-1 flex-col bg-white font-['Liberation_Sans',Arial,sans-serif] text-[#24292e]">
      <div className="ml-[247.500px] flex w-[544px] flex-col">
        <div className="grid h-[77px] w-[543.500px] grid-cols-3 gap-4">
          <div className={`${CARD} border-[#d9dce0] bg-[#fafbfc] pt-[18px]`}>School work and student projects</div>
          <div className={`${CARD} border-[#d9dce0] bg-[#fafbfc]`}>
            <span className="-mb-px ml-[-14px] h-px w-[6px] bg-[#2f7fe0]" />
            <span className="mt-[23px]">Use the GitHub API</span>
          </div>
          <div className={`${CARD} border-[#0366d6] bg-white`}>
            <span className="-mb-px h-px w-[2px] bg-[#5f9be0]" />
            <span className="mt-[27px]">Other</span>
          </div>
        </div>
        <h2 className="mt-[56px] text-[20px] leading-[30px] font-bold">I am interested in:</h2>
        <div className="mt-[13px] flex h-[21px] w-[49px] overflow-hidden rounded-[3px] bg-[#f1f8ff] text-[12px]">
          <span className="flex w-6 items-center justify-center border-r border-[#b4d9fa] pl-px">c</span>
          <span className="flex flex-1 items-center justify-center text-[#586069]">
            <svg viewBox="0 0 7 7" className="h-[7px] w-[7px]" stroke="#6a737d" strokeWidth="1.100"><path d="M.5.500l6 6M6.500.500l-6 6" /></svg>
          </span>
        </div>
        <div className="mt-2 flex h-[38px] items-center rounded-[3px] border border-[#d1d5da] pb-0.5 pl-2 font-['Liberation_Mono',monospace] text-[14px] text-[#b5b8bc] shadow-[inset_0_1px_2px_rgba(27,31,35,0.075)]">
          languages, frameworks, industries
        </div>
        <p className="mt-3 text-[12px] leading-[18px] text-[#586069]">We'll connect you with communities and projects that fit your interests.</p>
        <div className="mt-[4px] flex h-[26px] items-center gap-[7px] text-[12px] text-[#586069]">
          <span className="-mr-[3.500px] pb-0.5">For example:</span>
          <span className={CODE}>fsharp</span>
          <span className={CODE}>scikit-learn</span>
          <span className={CODE}>http</span>
        </div>
        <button className="mt-[66px] h-[55px] rounded-[3px] bg-[#0366d6] text-[14px] text-white">Complete setup</button>
        <a className="mt-6 self-center text-[14px] leading-[21px] text-[#0366d6]">Skip this step</a>
      </div>
      <footer className="mt-[55px] mr-4 ml-4 flex justify-between border-t border-[#eaecef] pt-10 text-[12px] leading-[18px] text-[#0366d6]">
        <div className="flex w-[420px] justify-between">
          <span className="text-[#6a737d]">© 2020 GitHub, Inc.</span>
          <a>Terms</a><a>Privacy</a><a>Security</a><a>Status</a><a>Help</a>
        </div>
        <Octocat className="h-6 w-6 text-[#c6cbd1]" />
        <div className="flex w-[419.500px] justify-between">
          <a>Contact GitHub</a><a>Pricing</a><a>API</a><a>Training</a><a>Blog</a><a>About</a>
        </div>
      </footer>
    </main>
  );
}

export default function App() {
  return (
    <div className={`flex h-[768px] w-[1366px] flex-col overflow-hidden leading-normal ${UI}`}>
      <TopBar />
      <div className="flex min-h-0 flex-1">
        <Dock />
        <div className="flex min-w-0 flex-1 flex-col">
          <div className="flex h-7 items-center bg-linear-to-b from-[#3a3935] to-[#4f4c44] pb-[3px]">
            <span className="w-[61px]" />
            <h1 className="flex-1 text-center text-[14px] font-bold tracking-[0.250px] text-[#dfdbd2]">GitHub · Where software is built - Mozilla Firefox</h1>
            <WindowButtons />
          </div>
          <TabStrip />
          <Toolbar />
          <div className="flex min-h-0 flex-1">
            <Sidebar />
            <div className="w-[5px] shrink-0 border-r border-[#c9c6c2] bg-[#f2f1f0]" />
            <Page />
            <div className="flex w-3 shrink-0 flex-col items-end bg-[#f2f1f0] pt-[475px]">
              <span className="w-[5px] flex-1 rounded-t-[1px] bg-[#f28e67]" />
            </div>
          </div>
        </div>
      </div>
    </div>
  );
}
